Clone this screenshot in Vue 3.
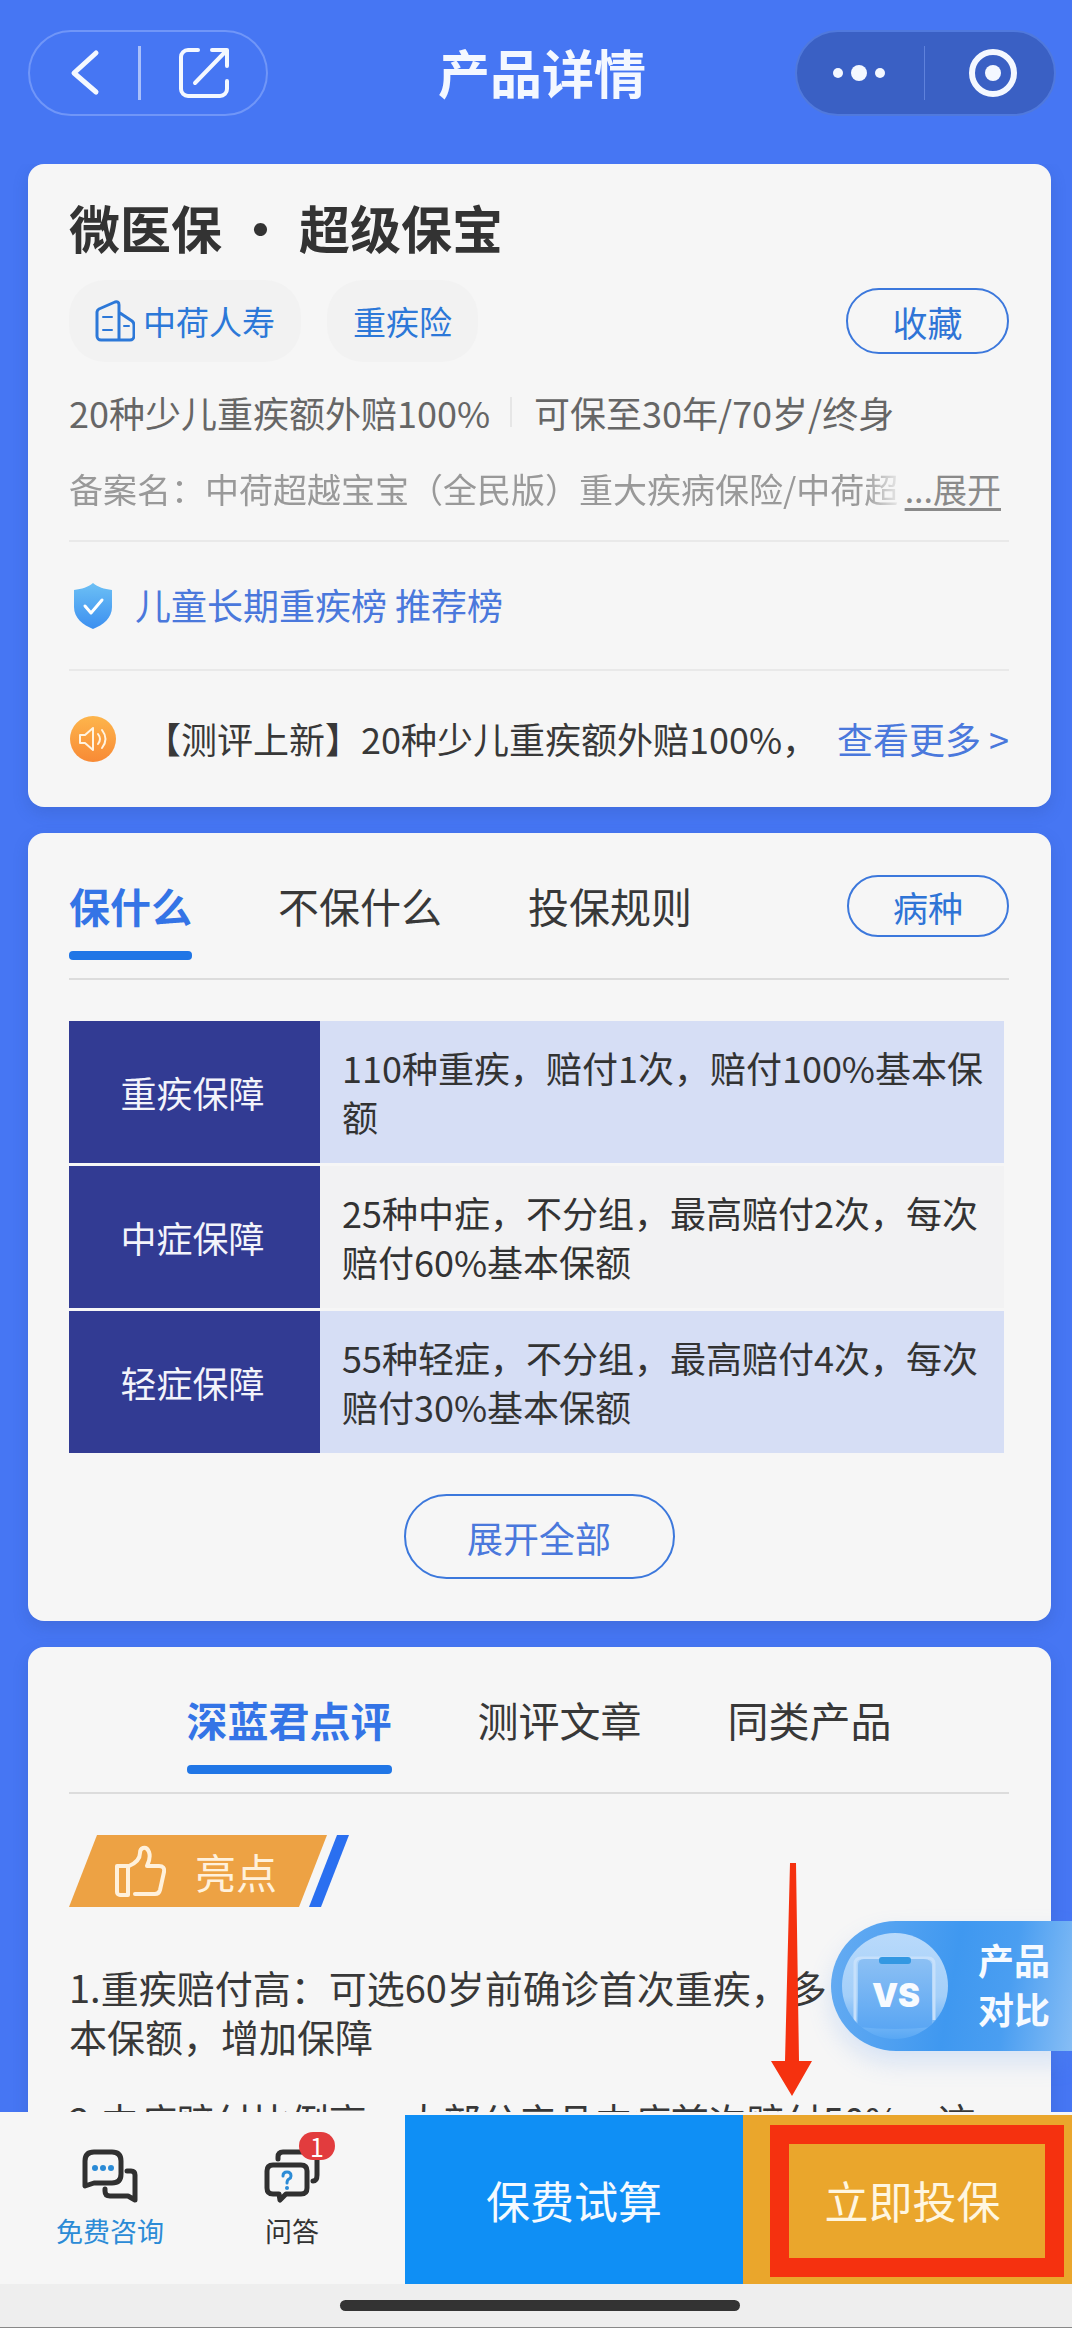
<script setup>
import { ref } from 'vue'

const coverTabs = ['保什么', '不保什么', '投保规则']
const reviewTabs = ['深蓝君点评', '测评文章', '同类产品']
const coverTab = ref(0)
const reviewTab = ref(0)

const coverage = [
  { name: '重疾保障', text: '110种重疾，赔付1次，赔付100%基本保额' },
  { name: '中症保障', text: '25种中症，不分组，最高赔付2次，每次赔付60%基本保额' },
  { name: '轻症保障', text: '55种轻症，不分组，最高赔付4次，每次赔付30%基本保额' },
]

const highlights = [
  ['1.重疾赔付高：可选60岁前确诊首次重疾，多', '本保额，增加保障'],
  ['2.中症赔付比例高：大部分产品中症首次赔付50%，这'],
]
</script>

<template>
  <div class="page" lang="zh-CN">
    <header class="topbar">
      <div class="capsule nav-capsule">
        <button class="icon-btn" aria-label="返回">
          <svg width="34" height="48" viewBox="0 0 34 48"><path d="M30 4 8 24l22 19" fill="none" stroke="#f4f8ff" stroke-width="5" stroke-linecap="round" stroke-linejoin="round" /></svg>
        </button>
        <i class="bar"></i>
        <button class="icon-btn" aria-label="分享">
          <svg width="52" height="52" viewBox="0 0 52 52" fill="none" stroke="#f4f8ff" stroke-width="4" stroke-linecap="round" stroke-linejoin="round"><path d="M20 3H10a7 7 0 0 0-7 7v32a7 7 0 0 0 7 7h32a7 7 0 0 0 7-7V34" /><path d="M34 3h15v16M48 4 17 36" /></svg>
        </button>
      </div>
      <h1 class="page-title">产品详情</h1>
      <div class="capsule menu-capsule">
        <button class="icon-btn" aria-label="更多">
          <svg width="56" height="20" viewBox="0 0 56 20" fill="#f4f8ff"><circle cx="7" cy="10" r="5" /><circle cx="28" cy="10" r="8" /><circle cx="49" cy="10" r="5" /></svg>
        </button>
        <i class="bar faint"></i>
        <button class="icon-btn" aria-label="关闭">
          <svg width="50" height="50" viewBox="0 0 50 50"><circle cx="25" cy="25" r="21" fill="none" stroke="#f4f8ff" stroke-width="6" /><circle cx="25" cy="25" r="8" fill="#f4f8ff" /></svg>
        </button>
      </div>
    </header>

    <main class="content">
      <section class="card">
        <h2 class="product-name">微医保<span class="dot">·</span>超级保宝</h2>
        <div class="tag-row">
          <span class="tag">
            <svg width="40" height="42" viewBox="0 0 40 42" fill="none" stroke="#2c78d8" stroke-width="3" stroke-linecap="round" stroke-linejoin="round"><path d="M24 40H6a4 4 0 0 1-4-4V12a4 4 0 0 1 2-3L20 2q4-1 4 3v35h11a4 4 0 0 0 4-4V25a5 5 0 0 0-2-4L25 13" /><path d="M8 17h9M8 30h9M29 26h5" stroke-width="2" /></svg>
            中荷人寿
          </span>
          <span class="tag">重疾险</span>
          <button class="pill save">收藏</button>
        </div>
        <div class="specs"><span>20种少儿重疾额外赔100%</span><i></i><span>可保至30年/70岁/终身</span></div>
        <div class="record">
          <span class="record-text">备案名：中荷超越宝宝（全民版）重大疾病保险/中荷超</span>
          <a href="#" class="unfold">...展开</a>
        </div>
        <div class="line-row rank-row">
          <svg width="40" height="48" viewBox="0 0 40 48"><defs><linearGradient id="shield" x1="0" y1="0" x2="0" y2="1"><stop offset="0" stop-color="#6cc0f5" /><stop offset="1" stop-color="#3c8ff0" /></linearGradient></defs><path d="M20 1c5 4 11 6 19 7v17c0 11-9 18-19 22C10 43 1 36 1 25V8C9 7 15 5 20 1Z" fill="url(#shield)" /><path d="m12 24 6 7 11-13" fill="none" stroke="#fff" stroke-width="3" stroke-linecap="round" stroke-linejoin="round" /></svg>
          <a href="#" class="rank-link">儿童长期重疾榜 推荐榜</a>
        </div>
        <div class="line-row notice-row">
          <svg width="48" height="48" viewBox="0 0 48 48"><defs><linearGradient id="horn" x1="0" y1="0" x2="0" y2="1"><stop offset="0" stop-color="#fdb54c" /><stop offset="1" stop-color="#f88a35" /></linearGradient></defs><circle cx="24" cy="24" r="23" fill="url(#horn)" /><path d="M11 20h5l8-7v22l-8-7h-5zM29 19q4 5 0 10M33 15q7 9 0 18" fill="none" stroke="#fff3e0" stroke-width="2" stroke-linecap="round" stroke-linejoin="round" /></svg>
          <span class="notice">【测评上新】20种少儿重疾额外赔100%，</span>
          <a href="#" class="more">查看更多 &gt;</a>
        </div>
      </section>

      <section class="card">
        <div class="tab-row">
          <nav class="tabs">
            <button v-for="(t, i) in coverTabs" :key="t" class="tab" :class="{ active: coverTab === i }" @click="coverTab = i">{{ t }}</button>
          </nav>
          <button class="pill disease">病种</button>
        </div>
        <table class="coverage">
          <tbody>
            <tr v-for="row in coverage" :key="row.name">
              <th scope="row">{{ row.name }}</th>
              <td>{{ row.text }}</td>
            </tr>
          </tbody>
        </table>
        <button class="pill expand">展开全部</button>
      </section>

      <section class="card">
        <div class="tab-row centered">
          <nav class="tabs">
            <button v-for="(t, i) in reviewTabs" :key="t" class="tab" :class="{ active: reviewTab === i }" @click="reviewTab = i">{{ t }}</button>
          </nav>
        </div>
        <div class="ribbon">
          <h3 class="ribbon-body">
            <svg width="52" height="52" viewBox="0 0 52 52" fill="none" stroke="#fff1dc" stroke-width="4" stroke-linejoin="round" stroke-linecap="round"><path d="M3 21h11v29H6a3 3 0 0 1-3-3zM21 49h20q4 0 5-4l4-18q1-6-5-6H33q4-8 2-14-2-5-6-4-3 1-3 5c0 6-4 10-11 13" /></svg>
            亮点
          </h3>
          <i class="ribbon-stripe"></i>
        </div>
        <div class="highlights">
          <p v-for="(lines, i) in highlights" :key="i"><span v-for="l in lines" :key="l">{{ l }}</span></p>
        </div>
      </section>

      <button class="compare">
        <svg width="106" height="106" viewBox="0 0 106 106">
          <defs>
            <linearGradient id="disc" x1="0" y1="0" x2="0" y2="1"><stop offset="0" stop-color="#b9dafb" /><stop offset=".6" stop-color="#a4cff9" /><stop offset="1" stop-color="#58a7f4" /></linearGradient>
            <linearGradient id="board" x1="0" y1="0" x2="0" y2="1"><stop offset="0" stop-color="#8cc0f4" /><stop offset="1" stop-color="#5aa6f3" /></linearGradient>
            <clipPath id="round"><circle cx="53" cy="53" r="53" /></clipPath>
          </defs>
          <circle cx="53" cy="53" r="53" fill="url(#disc)" />
          <g clip-path="url(#round)">
            <path d="M13 94V31q0-6 6-6h67q6 0 6 6v56" fill="none" stroke="#c6e0fb" stroke-width="3" />
            <path d="M16 94V32q0-6 6-6h60q8 0 8 8v60q-37 4-74 0z" fill="url(#board)" />
          </g>
          <rect x="37" y="24" width="32" height="7" rx="3" fill="#3398e2" />
          <text x="54" y="74" text-anchor="middle" class="vs">VS</text>
        </svg>
        <span class="compare-text">产品<br>对比</span>
      </button>
      <svg class="arrow" width="42" height="234" viewBox="0 0 42 234"><path d="M19 0h6l3 198h13L21 233 0 198h14z" fill="#f5310f" /></svg>
    </main>

    <footer class="actionbar">
      <div class="shortcuts">
        <button class="shortcut blue">
          <svg width="56" height="54" viewBox="0 0 56 54" fill="none" stroke="#303030" stroke-width="5" stroke-linejoin="round" stroke-linecap="round"><path d="M3 37V12q0-9 9-9h18q9 0 9 9v13q0 9-9 9H12z" /><path d="M45 22h4q4 0 4 4v25l-7-4H28q-5 0-5-5v-2" /><g fill="#2b8bd6" stroke="none"><circle cx="13" cy="19" r="3" /><circle cx="21" cy="19" r="3" /><circle cx="29" cy="19" r="3" /></g></svg>
          免费咨询
        </button>
        <button class="shortcut">
          <svg width="56" height="54" viewBox="0 0 56 54" fill="none" stroke="#303030" stroke-width="5" stroke-linejoin="round" stroke-linecap="round"><path d="M9 16h28q6 0 6 6v17q0 6-6 6H22l-6 6-1-6H9q-6 0-6-6V22q0-6 6-6z" /><path d="M14 10V8q0-5 5-5h29q5 0 5 5v18q0 6-4 6" /><path d="M19 27q0-4 4-4t4 4q0 2-2 3t-2 4" stroke="#2b8bd6" stroke-width="3" /><circle cx="23" cy="39" r="2" fill="#2b8bd6" stroke="none" /></svg>
          问答
          <b class="badge">1</b>
        </button>
      </div>
      <button class="cta quote">保费试算</button>
      <button class="cta insure">立即投保</button>
      <i class="focus-frame"></i>
    </footer>
    <div class="home"><i></i></div>
  </div>
</template>

<style>
body {
  margin: 0;
}
</style>

<style scoped>
.page {
  height: 100vh;
  display: flex;
  flex-direction: column;
  overflow: hidden;
  background: #4676f3;
  color: #383838;
  font-family: "Noto Sans CJK SC", "Noto Sans", sans-serif;
  font-size: 36px;
}
* {
  box-sizing: border-box;
}
button {
  margin: 0;
  padding: 0;
  border: 0;
  background: none;
  font: inherit;
  color: inherit;
  cursor: pointer;
}
a {
  color: inherit;
  text-decoration: none;
}
h1, h2, h3, p {
  margin: 0;
}
svg {
  display: block;
  flex: none;
}

.topbar {
  flex: none;
  display: grid;
  grid-template-columns: 1fr auto 1fr;
  align-items: center;
  padding: 30px 16px 48px 28px;
}
.capsule {
  height: 86px;
  display: flex;
  align-items: center;
  border: 2px solid #7096f8;
  border-radius: 43px;
}
.nav-capsule {
  width: 240px;
  padding: 0 36px;
  justify-content: space-between;
}
.menu-capsule {
  width: 261px;
  justify-self: end;
  padding: 0 36px 0 34px;
  justify-content: space-between;
  background: #3a60c4;
  border-color: #5079dd;
}
.bar {
  width: 3px;
  height: 54px;
  background: #a9c0fb;
}
.bar.faint {
  width: 1px;
  margin-right: 6px;
  background: #5f82dc;
}
.page-title {
  padding-bottom: 2px;
  font-size: 52px;
  line-height: 60px;
  font-weight: 700;
  color: #f4f8ff;
}

.content {
  flex: 1;
  min-height: 0;
  position: relative;
  overflow: hidden;
}
.card {
  margin: 0 21px 26px 28px;
  padding: 0 42px 0 41px;
  border-radius: 16px;
  background: #f6f6f6;
  box-shadow: 0 6px 16px rgba(40, 70, 140, 0.2);
  display: flow-root;
}

.product-name {
  margin-top: 33px;
  font-size: 51px;
  line-height: 60px;
  font-weight: 700;
  color: #333;
}
.dot {
  display: inline-block;
  width: 77px;
  text-align: center;
}
.tag-row {
  display: flex;
  align-items: center;
  gap: 26px;
  margin-top: 23px;
}
.tag {
  height: 82px;
  display: flex;
  align-items: center;
  gap: 8px;
  padding: 0 26px;
  border-radius: 36px;
  background: #f2f2f2;
  color: #2c78d8;
  font-size: 33px;
}
.pill {
  border: 2px solid #3c78dc;
  border-radius: 43px;
  color: #2f74d6;
}
.save {
  margin-left: auto;
  width: 163px;
  height: 66px;
  font-size: 35px;
}
.specs {
  margin-top: 25px;
  display: flex;
  align-items: center;
  line-height: 50px;
  color: #666;
}
.specs i {
  width: 2px;
  height: 30px;
  margin: 0 22px 0 20px;
  background: #e6e6e6;
}
.record {
  margin-top: 27px;
  padding-right: 8px;
  display: flex;
  justify-content: space-between;
  font-size: 34px;
  line-height: 50px;
  color: #999;
}
.record-text {
  flex: 1;
  min-width: 0;
  overflow: hidden;
  white-space: nowrap;
  -webkit-mask-image: linear-gradient(90deg, #000 95%, transparent);
  mask-image: linear-gradient(90deg, #000 95%, transparent);
}
.unfold {
  color: #8a8a8a;
  text-decoration: underline;
  text-underline-offset: 5px;
}
.line-row {
  display: flex;
  align-items: center;
  border-top: 2px solid #e9e9e9;
}
.rank-row {
  margin-top: 26px;
  height: 129px;
  padding-left: 4px;
  gap: 22px;
}
.rank-link,
.more,
.notice {
  padding-bottom: 3px;
}
.rank-link,
.more {
  color: #4a78dc;
}
.notice-row {
  height: 138px;
}
.notice {
  flex: 1;
  min-width: 0;
  margin-left: 28px;
  overflow: hidden;
  white-space: nowrap;
}

.tab-row {
  height: 147px;
  padding-top: 42px;
  display: flex;
  align-items: flex-start;
  justify-content: space-between;
  border-bottom: 2px solid #dcdcdc;
}
.centered {
  justify-content: center;
}
.tabs {
  display: flex;
  gap: 86px;
  padding-top: 5px;
}
.tab {
  height: 80px;
  padding-bottom: 30px;
  font-size: 41px;
  line-height: 50px;
  position: relative;
}
.tab.active {
  color: #3474e6;
  font-weight: 700;
}
.tab.active::after {
  content: "";
  position: absolute;
  left: 0;
  right: 0;
  bottom: 0;
  height: 9px;
  border-radius: 4px;
  background: #2076e6;
}
.disease {
  width: 162px;
  height: 62px;
  font-size: 35px;
}
.coverage {
  width: calc(100% - 5px);
  margin-top: 41px;
  border-spacing: 0;
  line-height: 49px;
}
.coverage th {
  width: 251px;
  height: 142px;
  padding: 0 4px 0 0;
  background: #323b93;
  background-clip: padding-box;
  color: #f3f4fb;
  font-weight: 400;
}
.coverage td {
  padding: 0 20px 0 22px;
  background: #d6def5;
  background-clip: padding-box;
  color: #333;
}
.coverage tr:nth-child(even) td {
  background-color: #f2f2f3;
}
.coverage tr + tr > * {
  height: 145px;
  border-top: 3px solid #f6f6f6;
}
.expand {
  display: block;
  width: 271px;
  height: 85px;
  margin: 41px auto 42px;
  color: #4a78dc;
}

.ribbon {
  display: flex;
  height: 72px;
  margin-top: 41px;
}
.ribbon-body {
  width: 258px;
  padding-left: 45px;
  display: flex;
  align-items: center;
  gap: 29px;
  background: #eda244;
  clip-path: polygon(28px 0, 100% 0, calc(100% - 28px) 100%, 0 100%);
  color: #fff1dc;
  font-size: 41px;
  font-weight: 400;
}
.ribbon-stripe {
  width: 40px;
  margin-left: -18px;
  background: #2a6ff0;
  clip-path: polygon(28px 0, 100% 0, 12px 100%, 0 100%);
}
.highlights {
  margin-top: 55px;
  font-size: 38px;
  line-height: 49px;
}
.highlights p {
  margin-bottom: 35px;
}
.highlights span {
  display: block;
  white-space: nowrap;
}

.compare {
  position: absolute;
  right: 0;
  bottom: 61px;
  width: 241px;
  height: 130px;
  padding-left: 11px;
  display: flex;
  align-items: center;
  gap: 30px;
  border-radius: 65px 0 0 65px;
  background: linear-gradient(100deg, #66acf2, #3f98f0 50%, #4a9ef1 72%, #86bdf5);
  box-shadow: 0 12px 24px rgba(90, 150, 240, 0.2);
}
.compare-text {
  padding-bottom: 4px;
  color: #f6faff;
  font-size: 36px;
  font-weight: 700;
  line-height: 49px;
}
.vs {
  font-family: Inter, sans-serif;
  font-weight: 900;
  font-size: 33px;
  fill: #f8fbff;
}
.arrow {
  position: absolute;
  right: 259px;
  bottom: 15px;
}

.actionbar {
  flex: none;
  height: 172px;
  padding-top: 3px;
  position: relative;
  display: flex;
  background: #f6f6f6;
}
.shortcuts {
  width: 405px;
  flex: none;
  display: flex;
  gap: 100px;
  padding: 34px 0 0 56px;
  align-items: flex-start;
}
.shortcut {
  position: relative;
  display: flex;
  flex-direction: column;
  align-items: center;
  gap: 10px;
  font-size: 27px;
  line-height: 36px;
  color: #333;
}
.blue {
  color: #2b8bd6;
}
.badge {
  position: absolute;
  left: 35px;
  top: -17px;
  width: 36px;
  height: 28px;
  border-radius: 14px;
  background: #e23c3e;
  color: #fff;
  font-size: 25px;
  font-weight: 400;
  line-height: 28px;
}
.cta {
  flex: 338 1 0;
  font-size: 44px;
  color: #f4faff;
}
.quote {
  background: #0f8ff5;
}
.insure {
  flex-grow: 329;
  text-indent: 10px;
  background: #eaa62c;
  color: #fff6e0;
}
.focus-frame {
  position: absolute;
  top: 13px;
  right: 8px;
  width: 294px;
  height: 152px;
  border: 19px solid #f5310f;
  pointer-events: none;
}
.home {
  flex: none;
  height: 44px;
  padding: 16px 0 0 7px;
  background: #eee;
  border-bottom: 1px solid #888;
}
.home i {
  display: block;
  width: 400px;
  height: 11px;
  margin: 0 auto;
  border-radius: 6px;
  background: #333;
}
</style>
